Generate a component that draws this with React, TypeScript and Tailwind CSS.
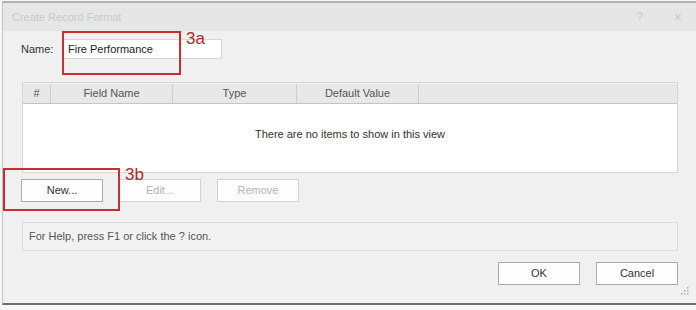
import React from "react";

const font = { fontFamily: '"Liberation Sans", Arial, sans-serif' };

function Btn({ label, disabled }: { label: string; disabled?: boolean }) {
  return (
    <div
      className={
        "w-[82px] h-[23px] flex items-center justify-center text-[11px] bg-[#fdfdfd] border " +
        (disabled ? "border-[#d2d2d2] text-[#b4b4b4]" : "border-[#acacac] text-[#333333]")
      }
    >
      {label}
    </div>
  );
}

export default function App() {
  return (
    <div className="w-[696px] h-[310px] bg-[#f7f7f7] pt-[1px] pl-[2px] overflow-hidden" style={font}>
      <div className="relative w-[694px] h-[304px] flex flex-col border-t-2 border-t-[#b0b0b0] border-l border-l-[#c4c4c4] border-b-2 border-b-[#6e6e6e] bg-[#f0f0f0]">
        {/* Title bar */}
        <div className="h-[28px] shrink-0 bg-[#e6e6e6] flex items-center pl-[9px] pr-[14px] text-[11px] text-[#cacaca]">
          <span>Create Record Format</span>
          <span className="ml-auto mr-[31px] text-[12px]">?</span>
          <span className="text-[14px]">×</span>
        </div>

        {/* Body */}
        <div className="flex-1 flex flex-col pl-[18px] pr-[16px]">
          {/* Name row */}
          <div className="flex items-center mt-[8px] h-[20px]">
            <span className="text-[11px] text-[#333333] w-[41px]">Name:</span>
            <div className="w-[160px] h-[20px] bg-white border border-[#d6d6d6] flex items-center pl-[5px] text-[11px] text-[#222222]">
              Fire Performance
            </div>
          </div>

          {/* Table */}
          <div className="mt-[23px] ml-[1px] w-[656px] h-[91px] border border-[#d6d6d6] bg-white flex flex-col">
            <div className="h-[21px] bg-[#e8e8e8] border-b border-[#c4c4c4] border-t border-t-[#f4f4f4] flex text-[11px] text-[#555555]">
              <div className="w-[28px] flex items-center justify-center border-r border-[#cdcdcd]">#</div>
              <div className="w-[122px] flex items-center justify-center border-r border-[#cdcdcd]">Field Name</div>
              <div className="w-[124px] flex items-center justify-center border-r border-[#cdcdcd]">Type</div>
              <div className="w-[122px] flex items-center justify-center border-r border-[#cdcdcd]">Default Value</div>
              <div className="flex-1" />
            </div>
            <div className="flex-1 flex justify-center pt-[22px] text-[11px] text-[#333333]">
              There are no items to show in this view
            </div>
          </div>

          {/* Buttons */}
          <div className="flex gap-[16px] mt-[6px]">
            <Btn label="New..." />
            <Btn label="Edit..." disabled />
            <Btn label="Remove" disabled />
          </div>

          {/* Help bar */}
          <div className="mt-[20px] ml-[1px] w-[656px] h-[29px] bg-[#f2f2f2] border border-[#dcdcdc] flex items-center pl-[6px] text-[11px] text-[#555555]">
            For Help, press F1 or click the ? icon.
          </div>

          {/* OK / Cancel */}
          <div className="flex justify-end gap-[16px] mt-[11px] w-[657px]">
            <Btn label="OK" />
            <Btn label="Cancel" />
          </div>
        </div>

        {/* Resize grip */}
        <svg className="absolute right-[7px] bottom-[8px]" width="8" height="8" viewBox="0 0 8 8">
          <rect x="6" y="0" width="1.5" height="1.5" fill="#b0b0b0" />
          <rect x="3" y="3" width="1.5" height="1.5" fill="#b0b0b0" />
          <rect x="6" y="3" width="1.5" height="1.5" fill="#b0b0b0" />
          <rect x="0" y="6" width="1.5" height="1.5" fill="#b0b0b0" />
          <rect x="3" y="6" width="1.5" height="1.5" fill="#b0b0b0" />
          <rect x="6" y="6" width="1.5" height="1.5" fill="#b0b0b0" />
        </svg>

        {/* Annotations */}
        <div className="absolute left-[59px] top-[28px] w-[119px] h-[44px] border-2 border-[#c3302f]" />
        <div className="absolute left-[183px] top-[27px] text-[17px] text-[#b3282b] leading-none">3a</div>
        <div className="absolute left-[0px] top-[165px] w-[117px] h-[43px] border-2 border-[#c3302f]" />
        <div className="absolute left-[122px] top-[163px] text-[17px] text-[#b3282b] leading-none">3b</div>
      </div>
    </div>
  );
}
